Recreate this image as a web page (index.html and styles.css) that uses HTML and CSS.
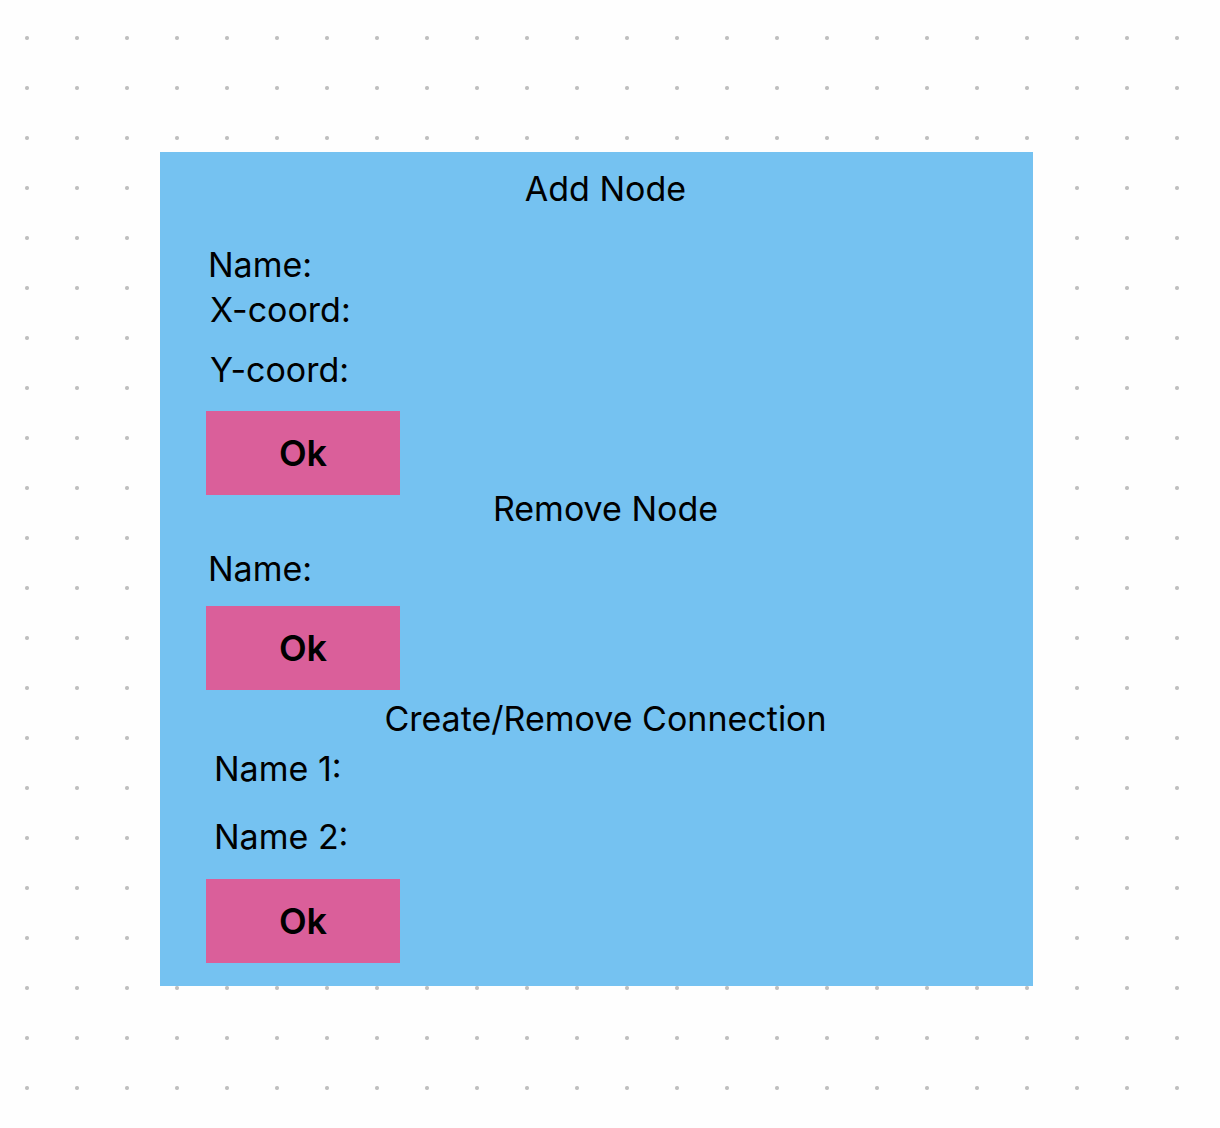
FILE: index.html
```html
<!DOCTYPE html>
<html lang="en">
<head>
  <meta charset="utf-8">
  <meta name="viewport" content="width=device-width, initial-scale=1">
  <title>Node editor</title>
  <link rel="stylesheet" href="styles.css">
</head>
<body>
  <main class="panel">
    <form class="group group-add">
      <h2 class="title">Add Node</h2>
      <div class="fields">
        <div class="field">
          <label for="add-name">Name:</label>
          <input id="add-name" type="text">
        </div>
        <div class="coords">
          <div class="field">
            <label for="add-x">X-coord:</label>
            <input id="add-x" type="text">
          </div>
          <div class="field">
            <label for="add-y">Y-coord:</label>
            <input id="add-y" type="text">
          </div>
        </div>
      </div>
      <button class="ok" type="button">Ok</button>
    </form>

    <form class="group group-remove">
      <h2 class="title">Remove Node</h2>
      <div class="fields">
        <div class="field">
          <label for="remove-name">Name:</label>
          <input id="remove-name" type="text">
        </div>
      </div>
      <button class="ok" type="button">Ok</button>
    </form>

    <form class="group group-connect">
      <h2 class="title">Create/Remove Connection</h2>
      <div class="fields">
        <div class="field">
          <label for="first-name">Name 1:</label>
          <input id="first-name" type="text">
        </div>
        <div class="field">
          <label for="second-name">Name 2:</label>
          <input id="second-name" type="text">
        </div>
      </div>
      <button class="ok" type="button">Ok</button>
    </form>
  </main>
</body>
</html>
```
FILE: styles.css
```css
* {
  box-sizing: border-box;
}

/* Dotted canvas */
body {
  margin: 0;
  padding: 152px 187px 142px 160px;
  background-color: #fefefe;
  background-image: radial-gradient(circle at 25px 25px, #bfbfbf 0, #bfbfbf 1.5px, transparent 2.5px);
  background-size: 50px 50px;
  background-position: 2px 13px;
  color: #000;
  font-family: Inter, "Liberation Sans", sans-serif;
  font-size: 34px;
  line-height: 28px;
}

.panel {
  padding: 23px 28px 23px 46px;
  background: #75c2f1;
}

.group,
.fields,
.coords {
  display: flex;
  flex-direction: column;
}

.title {
  margin: 0;
  font-size: 34px;
  font-weight: 400;
  text-align: center;
}

.fields {
  padding-left: 2px;
}

.field {
  display: flex;
  gap: 8px;
}

.field label {
  white-space: nowrap;
}

.field input {
  flex: 1;
  min-width: 0;
  height: 28px;
  padding: 0;
  border: 0;
  background: transparent;
  color: inherit;
  font: inherit;
}

.ok {
  width: 194px;
  height: 84px;
  padding: 0;
  border: 0;
  background: #da5f9a;
  color: inherit;
  font: inherit;
  font-size: 36px;
  font-weight: 600;
}

.group-add .fields {
  gap: 17px;
  margin: 48px 0 27px;
}

.coords {
  gap: 32px;
  padding-left: 2px;
}

.group-remove .fields {
  margin: 32px 0 23px;
}

.group-connect {
  margin-top: 15px;
}

.group-connect .fields {
  gap: 40px;
  margin: 22px 0 28px;
  padding-left: 8px;
}
```
